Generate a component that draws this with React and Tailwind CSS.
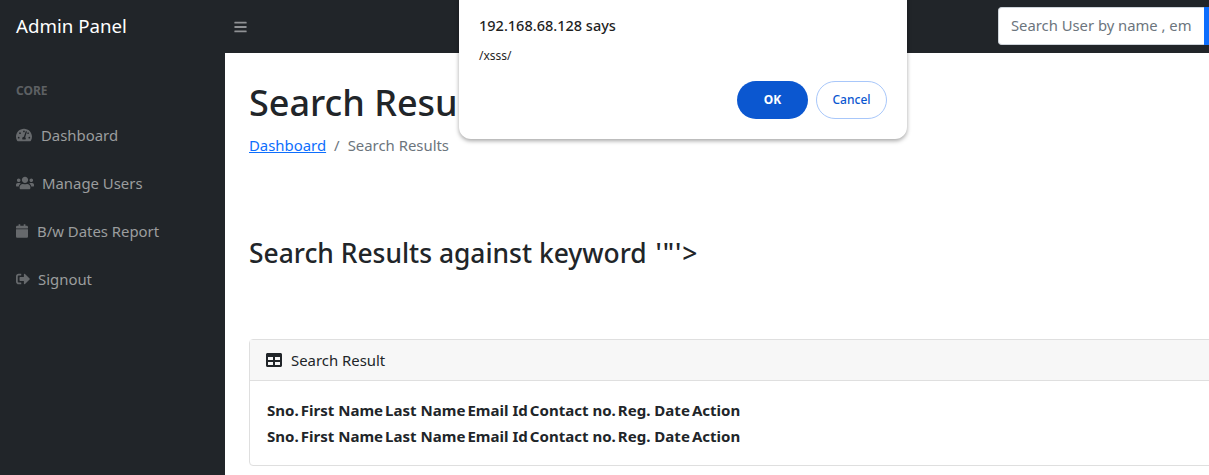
import React from "react";
import { FaTachometerAlt, FaUsers, FaCalendar, FaSignOutAlt, FaTable, FaBars } from "react-icons/fa";

const navItems = [
  { label: "Dashboard", icon: FaTachometerAlt, iconClass: "w-4 h-4", gap: "gap-[9px]" },
  { label: "Manage Users", icon: FaUsers, iconClass: "w-[18px] h-[18px]", gap: "gap-2" },
  { label: "B/w Dates Report", icon: FaCalendar, iconClass: "w-3 h-[14px]", gap: "gap-[9px]" },
  { label: "Signout", icon: FaSignOutAlt, iconClass: "w-[14px] h-[14px]", gap: "gap-2" },
];

const columns = ["Sno.", "First Name", "Last Name", "Email Id", "Contact no.", "Reg. Date", "Action"];

function HeaderRow() {
  return (
    <div className="flex gap-[2px] h-[26px] items-center font-bold text-[15.05px] text-[#212529]">
      {columns.map((c) => (
        <span key={c}>{c}</span>
      ))}
    </div>
  );
}

function App() {
  return (
    <div className="relative w-[1209px] h-[475px] overflow-hidden bg-white font-['Noto_Sans',sans-serif] text-[14.9px] text-[#212529]">
      <header className="flex items-center h-[53px] bg-[#212529]">
        <div className="w-[225px] pl-4 text-[18.7px] text-white">Admin Panel</div>
        <FaBars className="ml-[9px] w-[13px] h-[14px] text-[#8f9194]" />
        <div className="ml-auto flex h-[38px] mb-[2px] w-[211px] shrink-0">
          <div className="w-[206px] pl-3 bg-white border border-[#ced4da] border-r-0 rounded-l flex items-center text-[14.8px] text-[#6c757d] overflow-hidden whitespace-nowrap">
            Search User by name , em
          </div>
          <div className="w-[5px] bg-[#0d6efd]" />
        </div>
      </header>

      <div className="flex h-[422px]">
        <aside className="w-[225px] shrink-0 bg-[#212529] px-4 pt-[29px]">
          <div className="text-[12px] font-bold text-[#5d6063] h-[18px] flex items-center">CORE</div>
          <nav className="mt-[11px] flex flex-col">
            {navItems.map(({ label, icon: Icon, iconClass, gap }) => (
              <div key={label} className={`flex items-center h-[48px] ${gap} text-[#9b9d9e]`}>
                <Icon className={`${iconClass} text-[#66696c]`} />
                <span>{label}</span>
              </div>
            ))}
          </nav>
        </aside>

        <main className="w-[1100px] shrink-0 px-6">
          <h1 className="mt-[22px] text-[36px] leading-[56px] font-medium">Search Results</h1>
          <div className="flex gap-2 mt-[3px] text-[#6c757d]">
            <a className="text-[#0d6efd] underline">Dashboard</a>
            <span>/</span>
            <span>Search Results</span>
          </div>
          <h2 className="mt-[78px] text-[26.4px] leading-[38px] font-medium">
            Search Results against keyword <span className="ml-[2px] tracking-[1px]">'"'&gt;</span>
          </h2>
          <section className="mt-[67px] border border-[#dfdfdf] rounded">
            <div className="flex items-center gap-[9px] h-[41px] px-4 bg-[#f7f7f7] border-b border-[#dfdfdf]">
              <FaTable className="w-4 h-4" />
              <span>Search Result</span>
            </div>
            <div className="pl-[17px] pt-4 pb-4">
              <HeaderRow />
              <HeaderRow />
            </div>
          </section>
        </main>
      </div>

      <div className="absolute left-[459px] top-[-12px] w-[448px] h-[151px] bg-white rounded-xl shadow-[0_2px_4px_rgba(0,0,0,0.35)]">
        <div className="absolute left-5 top-[27px] text-[14.5px] font-medium text-[#1f1f1f]">192.168.68.128 says</div>
        <div className="absolute left-5 top-[59px] text-[12px] text-[#1f1f1f]">/xsss/</div>
        <div className="absolute right-5 bottom-5 flex gap-2">
          <button className="w-[71px] h-[38px] rounded-full bg-[#0b57d0] text-white text-[12px] font-bold">OK</button>
          <button className="w-[71px] h-[38px] rounded-full border border-[#a8c7fa] bg-white text-[#0b57d0] text-[12px] font-medium">Cancel</button>
        </div>
      </div>
    </div>
  );
}

export default App;
